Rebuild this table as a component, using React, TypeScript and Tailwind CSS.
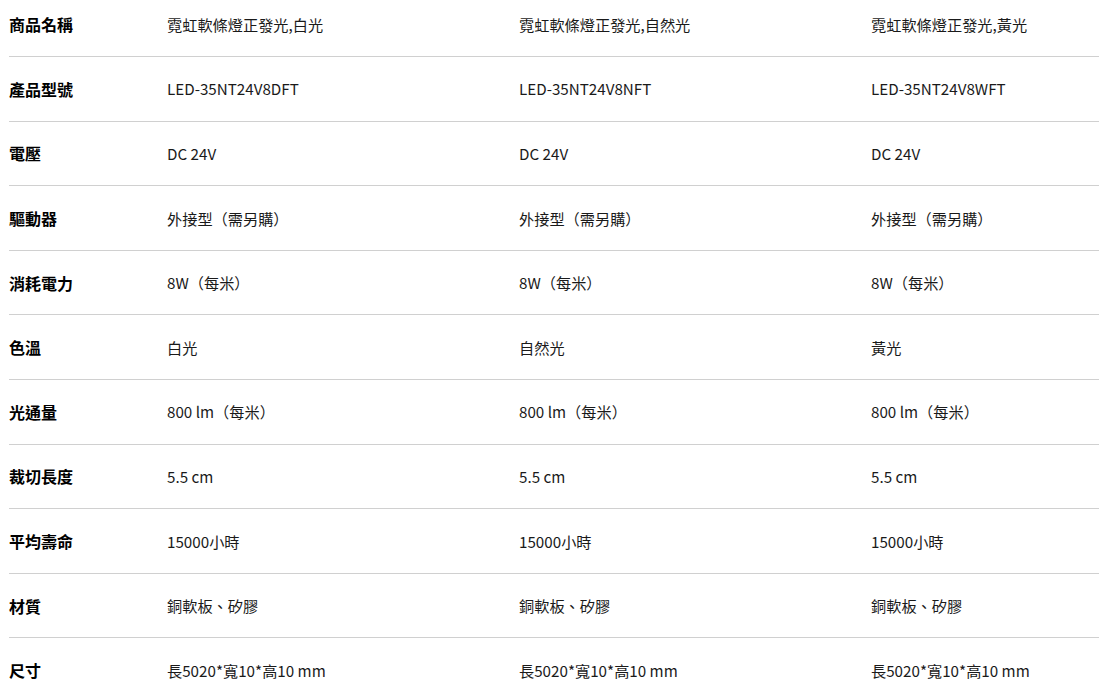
import React from "react";

const rows: [string, string, string, string][] = [
  ["商品名稱", "霓虹軟條燈正發光,白光", "霓虹軟條燈正發光,自然光", "霓虹軟條燈正發光,黃光"],
  ["產品型號", "LED-35NT24V8DFT", "LED-35NT24V8NFT", "LED-35NT24V8WFT"],
  ["電壓", "DC 24V", "DC 24V", "DC 24V"],
  ["驅動器", "外接型（需另購）", "外接型（需另購）", "外接型（需另購）"],
  ["消耗電力", "8W（每米）", "8W（每米）", "8W（每米）"],
  ["色溫", "白光", "自然光", "黃光"],
  ["光通量", "800 lm（每米）", "800 lm（每米）", "800 lm（每米）"],
  ["裁切長度", "5.5 cm", "5.5 cm", "5.5 cm"],
  ["平均壽命", "15000小時", "15000小時", "15000小時"],
  ["材質", "銅軟板、矽膠", "銅軟板、矽膠", "銅軟板、矽膠"],
  ["尺寸", "長5020*寬10*高10 mm", "長5020*寬10*高10 mm", "長5020*寬10*高10 mm"],
];

export default function App() {
  return (
    <div
      className="w-[1099px] h-[693px] overflow-hidden bg-white pl-[9px]"
      style={{ fontFamily: '"Noto Sans CJK TC", "Noto Sans", sans-serif' }}
    >
      <div className="-mt-[7.6px]">
        {rows.map((r, i) => (
          <div
            key={i}
            className="grid grid-cols-[152px_352px_352px_1fr] h-[64.6px] items-center border-b border-[#d0d0d0] text-[#1a1a1a]"
          >
            <div className="text-[16px] font-bold text-black">{r[0]}</div>
            <div className="text-[15.2px] pl-[6px]">{r[1]}</div>
            <div className="text-[15.2px] pl-[6px]">{r[2]}</div>
            <div className="text-[15.2px] pl-[6px]">{r[3]}</div>
          </div>
        ))}
      </div>
    </div>
  );
}
